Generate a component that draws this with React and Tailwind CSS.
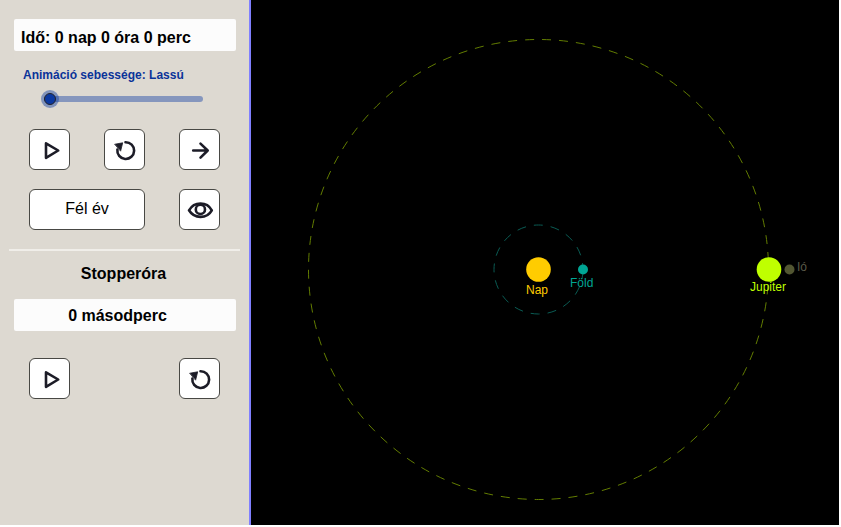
import { useState } from "react";

function IconButton({ label, children }) {
  return (
    <button
      type="button"
      aria-label={label}
      className="h-[41px] w-[41px] rounded-md border border-[#484844] bg-white"
    >
      <svg
        viewBox="1 1 39 39"
        className="block h-full w-full"
        fill="none"
        stroke="#1c1c27"
        strokeWidth="2.6"
        strokeLinecap="round"
        strokeLinejoin="round"
        aria-hidden="true"
      >
        {children}
      </svg>
    </button>
  );
}

function PlayIcon() {
  return <path d="M17 14.4 L29.2 21.5 L17 28.8 Z" />;
}

function ResetIcon() {
  return (
    <>
      <path d="M21.5 13.2 A8.4 8.4 0 1 1 13.4 20.5" />
      <path d="M11 15.2 L18.7 13.8 L16.7 21.8 Z" fill="#1c1c27" strokeWidth="0.8" />
    </>
  );
}

function ArrowIcon() {
  return <path d="M14.2 21.5 H28.3 M21.5 14.6 L28.7 21.5 L21.5 28.6" />;
}

function EyeIcon() {
  return (
    <>
      <path d="M10 21.3 C12.5 17 16.8 14.5 21.5 14.5 C26.2 14.5 30.5 17 32.8 21.3 C30.5 25.4 26.2 27.9 21.5 27.9 C16.8 27.9 12.5 25.4 10 21.3 Z" />
      <circle cx="21.4" cy="20.4" r="4.6" />
    </>
  );
}

function Controls() {
  const [speed, setSpeed] = useState(0);
  return (
    <aside className="flex w-[251px] shrink-0 flex-col border-r-2 border-[#8080ff] bg-[#ddd9d1] text-base leading-5 text-black">
      <div className="mt-[19px] mr-[13px] ml-[14px] flex h-8 items-center rounded-xs bg-[#fcfcfc] px-[7px] pt-1.5 font-bold">
        Idő: 0 nap 0 óra 0 perc
      </div>

      <label htmlFor="speed" className="mt-4 ml-[23px] text-xs leading-4 font-bold text-[#0a3399]">
        Animáció sebessége: Lassú
      </label>
      <input
        id="speed"
        type="range"
        min="0"
        max="2"
        value={speed}
        onChange={(e) => setSpeed(Number(e.target.value))}
        className="mt-2 ml-11 h-4 w-[159px] appearance-none bg-transparent [&::-webkit-slider-runnable-track]:h-1.5 [&::-webkit-slider-runnable-track]:rounded-full [&::-webkit-slider-runnable-track]:bg-[#8596bd] [&::-webkit-slider-thumb]:-mt-[3px] [&::-webkit-slider-thumb]:h-3 [&::-webkit-slider-thumb]:w-3 [&::-webkit-slider-thumb]:appearance-none [&::-webkit-slider-thumb]:rounded-full [&::-webkit-slider-thumb]:border [&::-webkit-slider-thumb]:border-[#22222a] [&::-webkit-slider-thumb]:bg-[#0a38a0] [&::-webkit-slider-thumb]:shadow-[0_0_0_3px_#0a38a070]"
      />

      <div className="mt-[22px] mr-[29px] ml-[29px] grid grid-cols-[41px_41px_41px] gap-x-[34px] gap-y-[19px]">
        <IconButton label="Indítás">
          <PlayIcon />
        </IconButton>
        <IconButton label="Visszaállítás">
          <ResetIcon />
        </IconButton>
        <IconButton label="Léptetés">
          <ArrowIcon />
        </IconButton>
        <button
          type="button"
          className="col-span-2 h-[41px] rounded-md border border-[#484844] bg-white pb-0.5"
        >
          Fél év
        </button>
        <IconButton label="Láthatóság">
          <EyeIcon />
        </IconButton>
      </div>

      <hr className="mt-[19px] mr-[9px] ml-[9px] border-t-2 border-[#f0eee9]" />
      <h2 className="mt-[13px] pr-0.5 text-center font-bold">Stopperóra</h2>
      <div className="mt-[15px] mr-[13px] ml-[14px] flex h-8 items-center justify-center rounded-xs bg-[#fcfcfc] pt-0.5 pr-[15px] font-bold">
        0 másodperc
      </div>

      <div className="mt-[27px] mr-[29px] ml-[29px] flex justify-between">
        <IconButton label="Stopper indítása">
          <PlayIcon />
        </IconButton>
        <IconButton label="Stopper nullázása">
          <ResetIcon />
        </IconButton>
      </div>
    </aside>
  );
}

function Orbits() {
  return (
    <main className="min-w-0 flex-1 bg-black">
      <svg className="block h-full w-full" role="img" aria-label="Nap, Föld, Jupiter, Ió" fontSize="12">
        <g fill="none" strokeWidth="1">
          <circle cx="287.5" cy="269.5" r="230" stroke="#637d00" strokeDasharray="9 8" strokeDashoffset="1" />
          <path
            d="M332 269.5 A44.5 44.5 0 0 0 243 269.5 A44.5 44.5 0 0 0 332 269.5"
            stroke="#0a5c54"
            strokeDasharray="9 8"
            strokeDashoffset="2.5"
          />
        </g>
        <circle cx="287.5" cy="269.5" r="12.3" fill="#ffcc00" />
        <circle cx="332" cy="269.5" r="5" fill="#00a594" />
        <circle cx="518" cy="269.5" r="12.3" fill="#bfff00" />
        <circle cx="538.5" cy="269.5" r="5" fill="#525632" />
        <text x="275" y="294" fill="#ffcc00">Nap</text>
        <text x="319" y="287" fill="#00a594">Föld</text>
        <text x="499" y="291" fill="#bfff00">Jupiter</text>
        <text x="546" y="271" fill="#5a5a48">Ió</text>
      </svg>
    </main>
  );
}

export default function App() {
  return (
    <div className="flex h-screen bg-white pr-0.5 pb-0.5 font-['Liberation_Sans',Arial,sans-serif]">
      <Controls />
      <Orbits />
    </div>
  );
}
